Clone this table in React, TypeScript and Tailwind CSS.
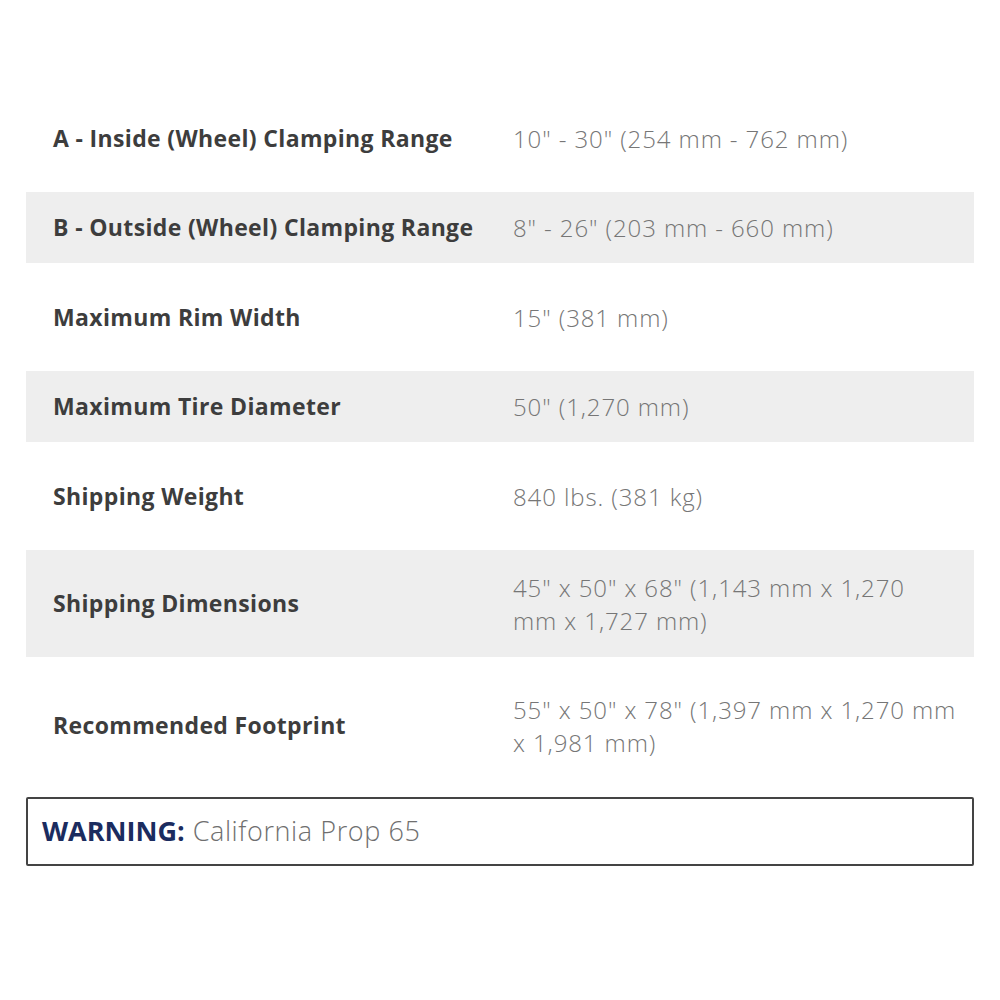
import React from 'react';

interface SpecRow {
  label: string;
  value: string[];
  shaded: boolean;
  height: string;
}

const rows: SpecRow[] = [
  { label: 'A - Inside (Wheel) Clamping Range', value: ['10" - 30" (254 mm - 762 mm)'], shaded: false, height: 'h-[108px]' },
  { label: 'B - Outside (Wheel) Clamping Range', value: ['8" - 26" (203 mm - 660 mm)'], shaded: true, height: 'h-[71px]' },
  { label: 'Maximum Rim Width', value: ['15" (381 mm)'], shaded: false, height: 'h-[108px]' },
  { label: 'Maximum Tire Diameter', value: ['50" (1,270 mm)'], shaded: true, height: 'h-[71px]' },
  { label: 'Shipping Weight', value: ['840 lbs. (381 kg)'], shaded: false, height: 'h-[108px]' },
  { label: 'Shipping Dimensions', value: ['45" x 50" x 68" (1,143 mm x 1,270', 'mm x 1,727 mm)'], shaded: true, height: 'h-[107px]' },
  { label: 'Recommended Footprint', value: ['55" x 50" x 78" (1,397 mm x 1,270 mm', 'x 1,981 mm)'], shaded: false, height: 'h-[137px]' },
];

export default function App() {
  return (
    <div className="w-[1000px] h-[1000px] bg-white font-['Open_Sans',sans-serif]">
      <div className="pt-[84px] px-[26px]">
        {/* Specs table */}
        <div className="flex flex-col">
          {rows.map((row) => (
            <div
              key={row.label}
              className={`flex items-center ${row.height} ${row.shaded ? 'bg-[#eeeeee]' : 'bg-white'}`}
            >
              <div className="w-[487px] pl-[27px] text-[23px] font-bold text-[#3d3d3d] tracking-[0.35px]">
                {row.label}
              </div>
              <div className="flex-1 text-[24px] leading-[33px] font-light text-[#767676] tracking-[0.9px] whitespace-nowrap">
                {row.value.map((line) => (
                  <div key={line}>{line}</div>
                ))}
              </div>
            </div>
          ))}
        </div>

        {/* Prop 65 notice */}
        <div className="mt-[3px] h-[69px] flex items-center border-2 border-[#444444] rounded-[2px] px-[14px] text-[27px]">
          <span className="font-bold text-[#1b2c5f]">WARNING:</span>
          <span className="ml-[8px] font-light text-[#6f6f6f] tracking-[0.6px]">California Prop 65</span>
        </div>
      </div>
    </div>
  );
}
